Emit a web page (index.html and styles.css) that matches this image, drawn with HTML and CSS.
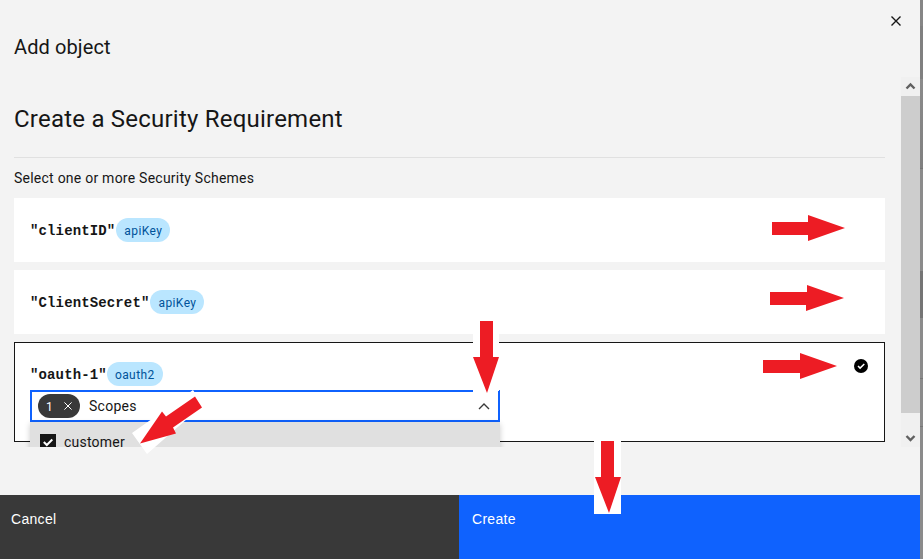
FILE: index.html
```html
<!DOCTYPE html>
<html lang="en">
<head>
<meta charset="utf-8">
<title>Add object</title>
<link rel="stylesheet" href="styles.css">
</head>
<body>
<div class="screen">
  <section class="modal">
    <header class="modal-header">
      <h1 class="modal-title">Add object</h1>
      <svg class="close" width="12" height="12" viewBox="0 0 12 12"><path d="M1.5 1.5l9 9M10.500 1.500l-9 9"/></svg>
    </header>
    <div class="scroller">
      <div class="content">
        <h2 class="heading">Create a Security Requirement</h2>
        <p class="hint">Select one or more Security Schemes</p>
        <div class="tile"><b class="name">"clientID"</b><span class="tag">apiKey</span></div>
        <div class="tile"><b class="name">"ClientSecret"</b><span class="tag">apiKey</span></div>
        <div class="tile selected">
          <div class="tile-row"><b class="name">"oauth-1"</b><span class="tag oauth">oauth2</span></div>
          <svg class="selected-icon" width="14" height="14" viewBox="0 0 14 14"><circle cx="7" cy="7" r="7"/><path d="M4 7l2.100 2.100L10.300 5"/></svg>
          <div class="select">
            <span class="count">1<svg width="8" height="8" viewBox="0 0 8 8"><path d="M.4.4l7.200 7.200M7.600.4L.4 7.600"/></svg></span>
            <span class="select-label">Scopes</span>
            <svg class="chevron" width="12" height="7" viewBox="0 0 12 7"><path d="M1 6l5-5 5 5"/></svg>
          </div>
          <div class="menu">
            <svg width="16" height="16" viewBox="0 0 16 16"><rect width="16" height="16" fill="#161616"/><path d="M3.800 8l3 3 5.500-5.500"/></svg>
            <span>customer</span>
          </div>
        </div>
      </div>
      <div class="scrollbar">
        <svg width="19" height="19" viewBox="0 0 19 19"><path d="M5.500 11.500l4-4 4 4"/></svg>
        <div class="thumb"></div>
        <svg class="down" width="19" height="34" viewBox="0 0 19 34"><path d="M5.500 23l4 4 4-4"/></svg>
      </div>
    </div>
    <footer class="actions">
      <button class="cancel">Cancel</button>
      <button class="create">Create</button>
    </footer>
  </section>
  <div class="backdrop"></div>
  <svg class="arrows" width="923" height="559" viewBox="0 0 923 559">
    <path class="paper" d="M473 321h26v70h-1v3h-25zM594 441h27v73h-27zM132 433l61-43 10 15-56 49z"/>
    <path d="M772 222h36v-7l37 13-37 13v-6h-36z"/>
    <path d="M770 292h37v-7l37 13-38 13v-6h-36z"/>
    <path d="M763 360h37v-7l37 13-37 13v-6h-37z"/>
    <path d="M480 321h13v36h6l-12 36-14-36h7z"/>
    <path d="M601 441h13v36h7l-12 36-14-36h6z"/>
    <path d="M140 443.500l22-32 4 5 29-20 7 11-29 20 3 6z"/>
  </svg>
</div>
</body>
</html>
```
FILE: styles.css
```css
* { box-sizing: border-box; }
body { margin: 0; font-family: Roboto, "Liberation Sans", sans-serif; color: #161616; background: #f3f3f3; }
.screen { position: relative; display: flex; width: 923px; height: 559px; overflow: hidden; }
.modal { display: flex; flex-direction: column; width: 920px; background: #f3f3f3; }
.backdrop { width: 3px; background: linear-gradient(#868686 0 26px, #808080 26px 79px, #8b8b8b 79px, #808080 168px, #757575 168px 169px, #8b8b8b 169px 271px, #757575 271px 318px, #8b8b8b 318px 378px, #777 378px 379px, #8b8b8b 379px 426px, #777 426px 427px, #8b8b8b 427px); }
.modal-header { display: flex; justify-content: space-between; height: 77px; padding: 35px 18px 0 14px; }
.modal-title { margin: 0; font-size: 20px; line-height: 24px; font-weight: 400; letter-spacing: .1px; }
.close { margin-top: -20px; fill: none; stroke: #161616; stroke-width: 1.4; }
.scroller { display: flex; height: 370px; overflow: hidden; }
.content { width: 871px; margin: 0 16px 0 14px; }
.heading { height: 81px; margin: 0; padding-top: 26px; border-bottom: 1px solid #e0e0e0; font-size: 24px; line-height: 32px; font-weight: 400; letter-spacing: .22px; }
.hint { height: 40px; margin: 0; padding-top: 10px; font-size: 14px; line-height: 20px; letter-spacing: .24px; }
.tile { display: flex; align-items: center; height: 64px; margin-bottom: 8px; padding: 0 16px; background: #fff; }
.name { padding-top: 2px; font: bold 14px/20px "Liberation Mono", monospace; letter-spacing: .13px; }
.tag { width: 54px; height: 24px; margin-left: 1px; border-radius: 12px; background: #bae6ff; color: #00539a; font-size: 12px; line-height: 26px; letter-spacing: .4px; text-align: center; }
.oauth { width: 56px; margin-left: 0; }
.selected { position: relative; display: block; height: 100px; padding: 19px 15px 0; border: 1px solid #161616; }
.tile-row { display: flex; align-items: center; height: 24px; }
.selected-icon { position: absolute; top: 16px; right: 16px; }
.selected-icon path { fill: none; stroke: #fff; stroke-width: 1.5; }
.select { display: flex; align-items: center; width: 470px; height: 32px; margin-top: 4px; padding: 0 8px 0 6px; border: 2px solid #0f62fe; background: #fff; font-size: 14px; letter-spacing: .26px; }
.count { display: flex; align-items: center; justify-content: space-between; width: 42px; height: 24px; margin-right: 9px; padding: 1px 8px 0; border-radius: 12px; background: #393939; color: #fff; font-size: 12px; }
.count svg { fill: none; stroke: #fff; margin-top: -1px; }
.chevron { margin-left: auto; fill: none; stroke: #393939; stroke-width: 1.4; }
.menu { position: relative; display: flex; align-items: center; gap: 8px; width: 470px; height: 40px; padding: 0 10px; background: #e0e0e0; box-shadow: 0 2px 6px rgba(0,0,0,.2); font-size: 14px; letter-spacing: .22px; }
.menu path { fill: none; stroke: #fff; stroke-width: 2; }
.scrollbar { width: 19px; background: #f0f0f0; }
.scrollbar svg { display: block; fill: none; stroke: #606060; stroke-width: 2.4; }
.thumb { height: 317px; background: #cdcdcd; }
.actions { display: flex; height: 64px; margin-top: 48px; }
.actions button { border: 0; padding: 0 0 16px 11px; text-align: left; color: #fff; font: 14px/18px "Liberation Sans", sans-serif; letter-spacing: .3px; }
.actions .cancel { width: 459px; background: #393939; }
.actions .create { width: 461px; padding-left: 13px; background: #0f62fe; }
.arrows { position: absolute; inset: 0; fill: #ed1c24; }
.paper { fill: #fff; }
```
